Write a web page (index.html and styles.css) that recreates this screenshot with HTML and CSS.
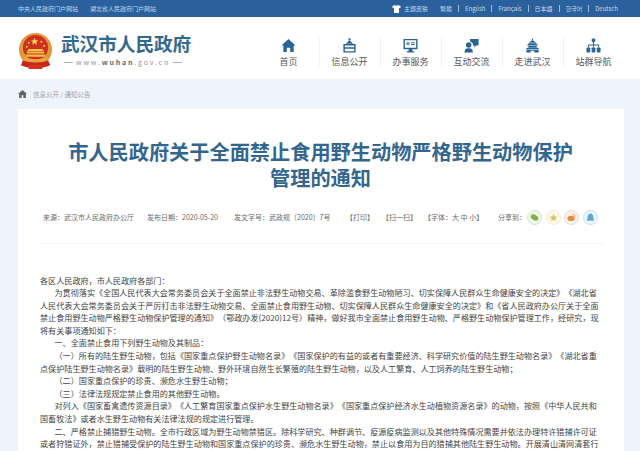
FILE: index.html
```html
<!DOCTYPE html>
<html lang="zh-CN">
<head>
    <meta charset="UTF-8">
    <meta name="viewport" content="width=device-width, initial-scale=1.0">
    <title>市人民政府关于全面禁止食用野生动物严格野生动物保护管理的通知</title>
    <link rel="stylesheet" href="styles.css">
</head>
<body>
    <div class="topbar">
        <div class="top-links">
            <span>中央人民政府门户网站</span>
            <span>湖北省人民政府门户网站</span>
        </div>
        <div class="top-tools">
            <svg class="shirt" viewBox="0 0 10 9"><path fill="#fff" d="M3 0 L0 1.6 L1 3.6 L2.2 3 L2.2 9 L7.8 9 L7.8 3 L9 3.6 L10 1.6 L7 0 Q5 1.6 3 0 Z"/></svg>
            <span class="skin">主题皮肤</span>
            <span class="lang first">繁體</span>
            <span class="lang">English</span>
            <span class="lang">Français</span>
            <span class="lang">日本語</span>
            <span class="lang">한국어</span>
            <span class="lang last">Deutsch</span>
        </div>
    </div>

    <div class="header">
        <div class="logo">
            <svg class="emblem" viewBox="0 0 36 38">
                <circle cx="18" cy="17" r="17" fill="#e2973a"/>
                <circle cx="18" cy="15" r="13" fill="#d0301f"/>
                <path fill="#f5d35a" d="M17 5l1.200 2.500 2.600.2-2 1.700.7 2.600-2.500-1.400-2.300 1.400.6-2.600-2-1.700 2.600-.2z"/>
                <circle cx="11" cy="10" r="1" fill="#f5d35a"/>
                <circle cx="24" cy="9" r="1" fill="#f5d35a"/>
                <circle cx="9" cy="14" r="1" fill="#f5d35a"/>
                <circle cx="27" cy="13" r="1" fill="#f5d35a"/>
                <path fill="#f0c04a" d="M9 19h18v2H9z M11 16.500h14l1.500 2h-17z M8 22h20v2.500H8z"/>
                <path fill="#c8261d" d="M5 28c4 3 22 3 26 0l2 5c-5 4-25 4-30 0z"/>
                <path fill="#e6ac3e" d="M6 25c5 2.500 19 2.500 24 0v2.500c-5 2.500-19 2.500-24 0z"/>
                <path fill="#d5301f" d="M11 33h14v4H11z"/>
            </svg>
            <div class="logo-text">
                <div class="site-name">武汉市人民政府</div>
                <div class="site-url"><i></i>www.<b>wuhan</b>.gov.cn<i></i></div>
            </div>
        </div>
        <div class="nav">
            <div class="nav-item">
                <svg viewBox="0 0 16 16"><path d="M8 1 L15.500 8 L13.500 8 L13.500 15 L9.800 15 L9.800 10.500 L6.200 10.500 L6.200 15 L2.500 15 L2.500 8 L0.500 8 Z"/></svg>
                <span>首页</span>
            </div>
            <div class="nav-item">
                <svg viewBox="0 0 16 16"><circle cx="8" cy="1.500" r="1.200"/><path fill-rule="evenodd" d="M8 2.500 L12 6 L4 6 Z M1.500 6.500 H14.500 V15.500 H1.500 Z M3 8 V9.800 H13 V8 Z M3 11.500 V14 H13 V11.500 Z"/></svg>
                <span>信息公开</span>
            </div>
            <div class="nav-item">
                <svg viewBox="0 0 16 16"><path fill-rule="evenodd" d="M0.500 1 H15.500 V12 H10 V14 H12 V15.500 H4 V14 H6 V12 H0.500 Z M2 2.500 V10.500 H14 V2.500 Z"/><rect x="3.500" y="4.500" width="3.500" height="3" opacity=".7"/><rect x="8.500" y="4.500" width="4" height="1"/><rect x="8.500" y="6.500" width="4" height="1"/></svg>
                <span>办事服务</span>
            </div>
            <div class="nav-item">
                <svg viewBox="0 0 16 16"><path d="M6.500 1 H15.500 V8 H13 L11 10 V8 H9.800 A4 4 0 0 0 6.500 4 Z"/><circle cx="5" cy="7.500" r="2.900"/><path d="M0.500 15.500 C0.500 11.500 2.500 10.800 5 10.800 C7.500 10.800 9.500 11.500 9.500 15.500 Z"/></svg>
                <span>互动交流</span>
            </div>
            <div class="nav-item">
                <svg viewBox="0 0 16 16"><path d="M7.400 0.500 H8.600 V2 H7.400 Z M8 2 L12 5 H4 Z M2 8 L4 5.500 H12 L14 8 Z M3.500 8.500 H12.500 V10 H3.500 Z M0.500 12 L2.500 10.500 H13.500 L15.500 12 Z"/><path fill-rule="evenodd" d="M1.500 12.500 H14.500 V15.500 H10 V13.500 H6 V15.500 H1.500 Z"/></svg>
                <span>走进武汉</span>
            </div>
            <div class="nav-item">
                <svg viewBox="0 0 16 16"><rect x="6" y="0.500" width="4" height="4" rx="1.500"/><path d="M7.500 4 H8.500 V7 H14 V10 H13 V8 H8.500 V10 H7.500 V8 H3 V10 H2 V7 H7.500 Z"/><rect x="0.500" y="10" width="4" height="5.500" rx="1"/><rect x="6" y="10" width="4" height="5.500" rx="1"/><rect x="11.500" y="10" width="4" height="5.500" rx="1"/></svg>
                <span>站群导航</span>
            </div>
        </div>
    </div>

    <div class="crumbs">
        <svg viewBox="0 0 10 9"><path fill="#5a6470" d="M5 0 L10 4.500 L8.800 4.500 L8.800 9 L6 9 L6 6 L4 6 L4 9 L1.200 9 L1.200 4.500 L0 4.500 Z"/></svg>
        <span>信息公开 / 通知公告</span>
    </div>

    <div class="card">
        <h1>市人民政府关于全面禁止食用野生动物严格野生动物保护管理的通知</h1>
        <div class="meta">
            <span class="m-source">来源：武汉市人民政府办公厅</span>
            <span class="m-date">发布日期：2020-05-20</span>
            <span class="m-code">发文字号：武政规〔2020〕7号</span>
            <span class="m-print">【打印】</span>
            <span class="m-scan">【扫一扫】</span>
            <span class="m-size">【字体：大 中 小】</span>
            <span class="m-share">分享到：</span>
            <div class="share-icons">
                <span class="share wechat"><svg viewBox="0 0 10 10"><ellipse cx="5" cy="5" rx="4.500" ry="3" transform="rotate(30 5 5)" fill="#7fb04f"/></svg></span>
                <span class="share star"><svg viewBox="0 0 10 10"><path fill="#d9c25c" d="M5 1l1.200 2.800 3 .3-2.300 2 .7 3L5 7.500 2.400 9.100l.7-3-2.300-2 3-.3z"/></svg></span>
                <span class="share weibo"><svg viewBox="0 0 10 10"><ellipse cx="4.500" cy="6" rx="4" ry="3" fill="#e08d45"/><path fill="none" stroke="#e08d45" d="M6 1.500c2 0 3 1 3 3"/></svg></span>
                <span class="share qq"><svg viewBox="0 0 10 10"><path fill="#5fa8cf" d="M5 .5c2 0 3 1.500 3 3.500l1 4.500H1L2 4C2 2 3 .5 5 .5z"/></svg></span>
            </div>
        </div>
        <div class="article">
            <p class="flush">各区人民政府，市人民政府各部门：</p>
            <p>为贯彻落实《全国人民代表大会常务委员会关于全面禁止非法野生动物交易、革除滥食野生动物陋习、切实保障人民群众生命健康安全的决定》《湖北省人民代表大会常务委员会关于严厉打击非法野生动物交易、全面禁止食用野生动物、切实保障人民群众生命健康安全的决定》和《省人民政府办公厅关于全面禁止食用野生动物严格野生动物保护管理的通知》（鄂政办发(2020)12号）精神，做好我市全面禁止食用野生动物、严格野生动物保护管理工作，经研究，现将有关事项通知如下：</p>
            <p>一、全面禁止食用下列野生动物及其制品：</p>
            <p>（一）所有的陆生野生动物，包括《国家重点保护野生动物名录》《国家保护的有益的或者有重要经济、科学研究价值的陆生野生动物名录》《湖北省重点保护陆生野生动物名录》载明的陆生野生动物、野外环境自然生长繁殖的陆生野生动物，以及人工繁育、人工饲养的陆生野生动物；</p>
            <p>（二）国家重点保护的珍贵、濒危水生野生动物；</p>
            <p>（三）法律法规规定禁止食用的其他野生动物。</p>
            <p>对列入《国家畜禽遗传资源目录》《人工繁育国家重点保护水生野生动物名录》《国家重点保护经济水生动植物资源名录》的动物，按照《中华人民共和国畜牧法》或者水生野生动物有关法律法规的规定进行管理。</p>
            <p>二、严格禁止捕猎野生动物。全市行政区域为野生动物禁猎区。除科学研究、种群调节、疫源疫病监测以及其他特殊情况需要并依法办理特许猎捕许可证或者狩猎证外，禁止猎捕受保护的陆生野生动物和国家重点保护的珍贵、濒危水生野生动物，禁止以食用为目的猎捕其他陆生野生动物。开展清山清网清套行动</p>
        </div>
    </div>
</body>
</html>
```

FILE: styles.css
```css
html, body {
    margin: 0;
    height: 451px;
    overflow: hidden;
}
body {
    font-family: "Noto Sans CJK SC", "Noto Sans", sans-serif;
    background: #eff3fb;
    color: #333;
    text-spacing-trim: space-all;
}
.topbar {
    height: 17px;
    background: #2a619c;
    color: #c4d6ea;
    font-size: 6px;
    line-height: 17px;
    display: flex;
    justify-content: space-between;
    padding: 0 22px 0 18px;
}
.top-links {
    display: flex;
    gap: 12px;
}
.top-tools {
    display: flex;
    align-items: center;
}
.shirt {
    width: 9px;
    height: 8px;
    margin-right: 3px;
}
.skin {
    margin-right: 12px;
}
.lang {
    line-height: 7px;
    padding: 0 6px;
    border-left: 1px solid #9fbbd8;
}
.lang.first {
    border-left: none;
    padding-left: 0;
}
.lang.last {
    padding-right: 0;
}
.header {
    height: 62px;
    background: #fff;
    display: flex;
    justify-content: space-between;
    padding-left: 18px;
}
.logo {
    display: flex;
    align-items: center;
    gap: 8px;
}
.emblem {
    width: 35px;
    height: 37px;
    margin-top: 6px;
}
.logo-text {
    margin-top: 2px;
}
.site-name {
    font-size: 18.600px;
    line-height: 24px;
    font-weight: 700;
    color: #33688f;
}
.site-url {
    display: flex;
    align-items: center;
    font-size: 7px;
    line-height: 10px;
    letter-spacing: 1.800px;
    color: #8f979f;
    margin-top: 2px;
}
.site-url b {
    color: #5d6b78;
}
.site-url i {
    width: 9px;
    height: 1px;
    background: #a8aeb4;
    margin: 0 3px;
}
.nav {
    display: flex;
    padding-right: 16px;
}
.nav-item {
    width: 61px;
    height: 62px;
    box-sizing: border-box;
    display: flex;
    flex-direction: column;
    align-items: center;
    padding-top: 21px;
    position: relative;
    font-size: 9px;
    line-height: 12px;
    color: #555;
}
.nav-item svg {
    width: 15px;
    height: 15px;
    fill: #2a6497;
    margin-bottom: 3px;
}
.nav-item + .nav-item::before {
    content: "";
    position: absolute;
    left: 0;
    top: 20px;
    height: 30px;
    width: 1px;
    background: #f1f1f1;
}
.crumbs {
    height: 30px;
    display: flex;
    align-items: center;
    gap: 6px;
    padding-left: 18px;
    font-size: 6.500px;
    color: #a0a5ad;
}
.crumbs svg {
    width: 9px;
    height: 8px;
}
.card {
    margin: 0 16px 0 18px;
    background: #fff;
    padding: 30px 23px 0 22px;
}
h1 {
    margin: 0;
    padding: 0 26px;
    font-size: 20.200px;
    line-height: 26px;
    font-weight: 700;
    color: #33668f;
    text-align: center;
}
.meta {
    margin-top: 18px;
    padding: 0 0 18px 3px;
    margin-right: -4px;
    height: 16px;
    border-bottom: 1px solid #f6f6f6;
    display: flex;
    align-items: center;
    font-size: 7px;
    color: #6a6a6a;
    white-space: nowrap;
}
.m-source { width: 104px; }
.m-date { width: 87px; }
.m-code { width: 112px; }
.m-print { width: 36px; }
.m-scan { width: 42px; }
.m-size { width: 74px; }
.m-share { width: 29px; }
.share-icons {
    display: flex;
    gap: 3.500px;
}
.share {
    width: 15px;
    height: 15px;
    box-sizing: border-box;
    border-radius: 50%;
    border: 1px solid;
    display: flex;
    align-items: center;
    justify-content: center;
}
.share svg {
    width: 9px;
    height: 9px;
}
.wechat { border-color: #d5e6c6; background: #f0f7e8; }
.star { border-color: #f2ecc8; background: #fbf8e6; }
.weibo { border-color: #e9dccf; background: #fbf0e5; }
.qq { border-color: #c6e2ef; background: #ecf6fb; }
.article {
    margin-top: 30.500px;
    font-size: 8.100px;
    line-height: 12.600px;
    color: #444;
}
.article p {
    margin: 0;
    text-indent: 14.500px;
}
.article p.flush {
    text-indent: 0;
}
```
